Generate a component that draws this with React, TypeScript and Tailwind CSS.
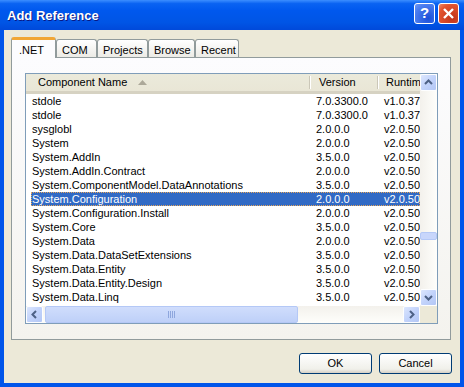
const rows: [string, string, string][] = [
  ["stdole", "7.0.3300.0", "v1.0.3705"],
  ["stdole", "7.0.3300.0", "v1.0.3705"],
  ["sysglobl", "2.0.0.0", "v2.0.50727"],
  ["System", "2.0.0.0", "v2.0.50727"],
  ["System.AddIn", "3.5.0.0", "v2.0.50727"],
  ["System.AddIn.Contract", "2.0.0.0", "v2.0.50727"],
  ["System.ComponentModel.DataAnnotations", "3.5.0.0", "v2.0.50727"],
  ["System.Configuration", "2.0.0.0", "v2.0.50727"],
  ["System.Configuration.Install", "2.0.0.0", "v2.0.50727"],
  ["System.Core", "3.5.0.0", "v2.0.50727"],
  ["System.Data", "2.0.0.0", "v2.0.50727"],
  ["System.Data.DataSetExtensions", "3.5.0.0", "v2.0.50727"],
  ["System.Data.Entity", "3.5.0.0", "v2.0.50727"],
  ["System.Data.Entity.Design", "3.5.0.0", "v2.0.50727"],
  ["System.Data.Linq", "3.5.0.0", "v2.0.50727"],
];

const SELECTED = 7;

function Arrow({ dir }: { dir: "up" | "down" | "left" | "right" }) {
  const pts = {
    up: "4,9 7.5,5.5 11,9",
    down: "4,6 7.5,9.5 11,6",
    left: "9,4 5.5,7.5 9,11",
    right: "6,4 9.5,7.5 6,11",
  }[dir];
  return (
    <div className="flex h-full w-full items-center justify-center rounded-[2px] border border-[#FDFEFF] bg-[linear-gradient(135deg,#DCE6FD_0%,#C2D3FB_50%,#B3C7F5_100%)]">
      <svg width="15" height="15" viewBox="0 0 15 15">
        <polyline points={pts} fill="none" stroke="#4D6185" strokeWidth="2" />
      </svg>
    </div>
  );
}

function Tab({ label, active, w }: { label: string; active?: boolean; w: number }) {
  if (active) {
    return (
      <div
        className="relative z-10 -mb-px flex h-[21px] items-start rounded-t-[3px] border-x border-[#919B9C] border-t-[3px] border-t-[#F1A634] bg-[#FCFCFE] pl-[7px] pt-[2px]"
        style={{ width: w }}
      >
        {label}
      </div>
    );
  }
  return (
    <div
      className="flex h-[18px] items-start rounded-t-[3px] border border-b-0 border-[#919B9C] bg-[linear-gradient(to_bottom,#FFFFFF,#ECEBE6)] pl-[5px] pt-[2px]"
      style={{ width: w }}
    >
      {label}
    </div>
  );
}

export default function App() {
  return (
    <div className="flex h-[387px] w-[464px] flex-col font-['Liberation_Sans',Arial,sans-serif] text-[11px] text-black">
      {/* title bar */}
      <div className="flex h-[30px] items-start bg-[linear-gradient(to_bottom,#3C8EFF_0%,#0A63F2_12%,#0058EE_35%,#0055E5_75%,#0049DA_100%)] pl-[7px]">
        <div className="mt-[6px] flex-1 text-[13px] font-bold text-white [text-shadow:1px_1px_0_#0A1883]">
          Add Reference
        </div>
        <div className="mr-[3px] mt-[3px] flex h-[21px] w-[21px] items-center justify-center rounded-[3px] border border-white bg-[radial-gradient(circle_at_70%_75%,#1B4FD8,#4A7DF0_70%,#6E98F5)] text-[15px] font-bold text-white">
          ?
        </div>
        <div className="mr-[5px] mt-[3px] flex h-[21px] w-[21px] items-center justify-center rounded-[3px] border border-white bg-[radial-gradient(circle_at_70%_75%,#C0341A,#E3542F_70%,#EE8A6A)]">
          <svg width="13" height="13" viewBox="0 0 13 13">
            <path d="M2 2 L11 11 M11 2 L2 11" stroke="white" strokeWidth="2.4" />
          </svg>
        </div>
      </div>

      {/* body */}
      <div className="flex flex-1 flex-col border-x-4 border-b-4 border-[#0055EA] bg-[#ECE9D8]">
        <div className="ml-[7px] mt-[7px] flex items-end">
          <Tab label=".NET" active w={45} />
          <Tab label="COM" w={41} />
          <Tab label="Projects" w={51} />
          <Tab label="Browse" w={47} />
          <Tab label="Recent" w={44} />
        </div>

        <div className="ml-[7px] h-[283px] w-[440px] border border-[#919B9C] bg-[linear-gradient(to_bottom,#FCFCFE,#F4F3EE)] pl-[13px] pt-[15px]">
          <div className="grid h-[251px] w-[413px] grid-cols-[1fr_17px] grid-rows-[1fr_17px] border border-[#7F9DB9] bg-white">
            {/* list content */}
            <div className="overflow-hidden">
              <div className="flex h-[20px] items-center whitespace-nowrap border-b-[3px] border-[#D6D2C2] bg-[linear-gradient(to_bottom,#EBEADB,#E9E6D6)]">
                <div className="flex w-[283px] shrink-0 items-center pl-[12px]">
                  Component Name
                  <svg className="ml-[11px]" width="9" height="5" viewBox="0 0 9 5">
                    <polygon points="0,5 4.5,0 9,5" fill="#ACA899" />
                  </svg>
                </div>
                <div className="h-[13px] w-[2px] shrink-0 border-l border-r border-l-[#CBC7B8] border-r-white" />
                <div className="w-[66px] shrink-0 pl-[8px]">Version</div>
                <div className="h-[13px] w-[2px] shrink-0 border-l border-r border-l-[#CBC7B8] border-r-white" />
                <div className="shrink-0 pl-[7px]">Runtime</div>
              </div>
              {rows.map(([name, ver, rt], i) => (
                <div
                  key={i}
                  className={
                    "ml-[5px] flex h-[14px] items-center whitespace-nowrap " +
                    (i === SELECTED
                      ? "border border-dotted border-[#E6A65A] bg-[#316AC5] text-white"
                      : "border border-transparent")
                  }
                >
                  <div className="w-[278px] shrink-0 overflow-hidden">{name}</div>
                  <div className="w-[68px] shrink-0 pl-[6px]">{ver}</div>
                  <div className="shrink-0 pl-[6px]">{rt}</div>
                </div>
              ))}
            </div>

            {/* vertical scrollbar */}
            <div className="flex flex-col bg-[linear-gradient(to_right,#F3F1EC,#FEFEFB)]">
              <div className="h-[17px]">
                <Arrow dir="up" />
              </div>
              <div className="relative flex-1">
                <div className="absolute left-0 top-[141px] h-[8px] w-full rounded-[2px] border border-[#B4C8F6] bg-[#C8D6FB]" />
              </div>
              <div className="h-[17px]">
                <Arrow dir="down" />
              </div>
            </div>

            {/* horizontal scrollbar */}
            <div className="flex bg-[linear-gradient(to_bottom,#F3F1EC,#FEFEFB)]">
              <div className="w-[17px]">
                <Arrow dir="left" />
              </div>
              <div className="flex flex-1 items-stretch pl-[2px]">
                <div className="flex w-[253px] items-center justify-center rounded-[2px] border border-[#B4C8F6] bg-[linear-gradient(to_bottom,#D0DDFC,#BED0F8)]">
                  <svg width="7" height="7" viewBox="0 0 7 7">
                    <path d="M0.5 0 V7 M2.5 0 V7 M4.5 0 V7 M6.5 0 V7" stroke="#8EA6DD" strokeWidth="1" />
                  </svg>
                </div>
              </div>
              <div className="w-[17px]">
                <Arrow dir="right" />
              </div>
            </div>
            <div className="bg-[#ECE9D8]" />
          </div>
        </div>

        <div className="mr-[8px] mt-[13px] flex justify-end gap-[7px]">
          <button className="h-[21px] w-[73px] rounded-[3px] border border-[#003C74] bg-[linear-gradient(to_bottom,#FFFFFF,#F0F0EA_80%,#D6D0C5)]">
            OK
          </button>
          <button className="h-[21px] w-[73px] rounded-[3px] border border-[#003C74] bg-[linear-gradient(to_bottom,#FFFFFF,#F0F0EA_80%,#D6D0C5)]">
            Cancel
          </button>
        </div>
      </div>
    </div>
  );
}
